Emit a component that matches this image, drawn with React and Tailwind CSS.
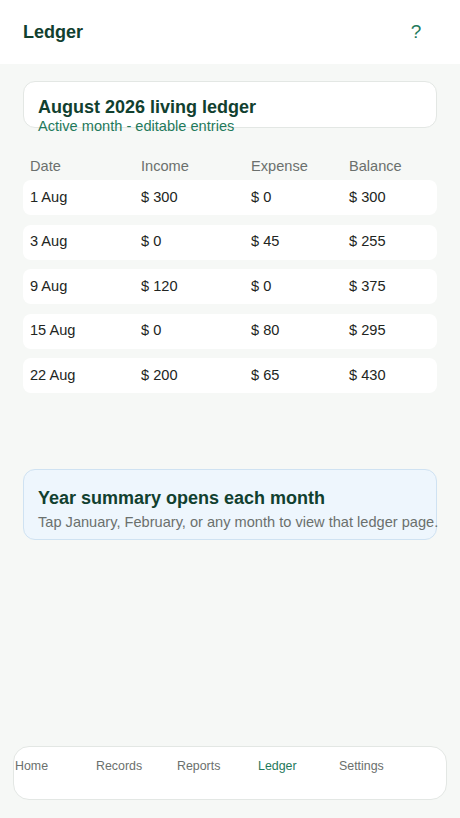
export default function App() {
  const rows = [
    { date: '1 Aug', income: '$ 300', expense: '$ 0', balance: '$ 300' },
    { date: '3 Aug', income: '$ 0', expense: '$ 45', balance: '$ 255' },
    { date: '9 Aug', income: '$ 120', expense: '$ 0', balance: '$ 375' },
    { date: '15 Aug', income: '$ 0', expense: '$ 80', balance: '$ 295' },
    { date: '22 Aug', income: '$ 200', expense: '$ 65', balance: '$ 430' },
  ]
  const tabs = ['Home', 'Records', 'Reports', 'Ledger', 'Settings']
  const cols = 'grid grid-cols-[111px_110px_98px_1fr]'

  return (
    <div className="min-h-screen bg-[#f6f8f6] font-['Liberation_Sans',Arial,sans-serif] flex flex-col">
      <header className="h-16 bg-white flex items-center justify-between pl-[23px] pr-6">
        <h1 className="text-[18px] font-bold text-[#11402f] mt-px">Ledger</h1>
        <button className="w-10 h-10 flex items-center justify-center text-[19px] text-[#1f7a5c] mt-px">?</button>
      </header>

      <main className="flex-1 px-[23px] pt-[17px]">
        <section className="h-[47px] bg-white border border-[#e3e7e4] rounded-xl pl-[14px] pt-[15px] leading-none">
          <h2 className="text-[18px] font-bold text-[#11402f] leading-[20px]">August 2026 living ledger</h2>
          <p className="text-[14.6px] text-[#1f7a5c] leading-[18px] whitespace-nowrap">Active month - editable entries</p>
        </section>

        <div className={`${cols} mt-[30px] px-[7px] text-[14.6px] leading-[17px] text-[#6b706d]`}>
          <span>Date</span>
          <span>Income</span>
          <span>Expense</span>
          <span>Balance</span>
        </div>

        <div className="mt-[5px] flex flex-col gap-[9.5px]">
          {rows.map((r) => (
            <div
              key={r.date}
              className={`${cols} items-center h-[35px] bg-white rounded-lg px-[7px] text-[14.6px] text-[#222522]`}
            >
              <span>{r.date}</span>
              <span>{r.income}</span>
              <span>{r.expense}</span>
              <span>{r.balance}</span>
            </div>
          ))}
        </div>

        <section className="mt-[76px] h-[71px] bg-[#eef6fd] border border-[#cfe2f2] rounded-xl pl-[14px] pt-[17px]">
          <h2 className="text-[18px] font-bold text-[#11402f] leading-[22px]">Year summary opens each month</h2>
          <p className="mt-[5px] text-[14.6px] text-[#6b706d] leading-[17px] whitespace-nowrap">
            Tap January, February, or any month to view that ledger page.
          </p>
        </section>
      </main>

      <nav className="mx-[13px] mb-[18px] h-[54px] bg-white border border-[#e3e7e4] rounded-2xl flex pl-px pt-[12px]">
        {tabs.map((t) => (
          <span
            key={t}
            className={`w-[81px] text-[12.4px] leading-[14px] ${t === 'Ledger' ? 'text-[#1f7a5c]' : 'text-[#6b706d]'}`}
          >
            {t}
          </span>
        ))}
      </nav>
    </div>
  )
}
